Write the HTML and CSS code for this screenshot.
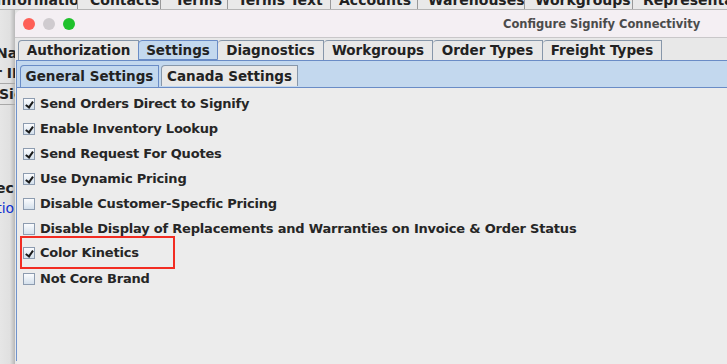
FILE: index.html
```html
<!DOCTYPE html>
<html lang="en">
  <head>
    <meta charset="UTF-8" />
    <title>Configure Signify Connectivity</title>
    <link rel="stylesheet" href="styles.css">
  </head>
  <body>
    <div class="app-tabs">
      <span class="app-tab tab-info">Information</span>
      <span class="app-tab tab-contacts">Contacts</span>
      <span class="app-tab tab-terms">Terms</span>
      <span class="app-tab tab-termstext">Terms Text</span>
      <span class="app-tab tab-accounts">Accounts</span>
      <span class="app-tab tab-warehouses">Warehouses</span>
      <span class="app-tab tab-workgroups">Workgroups</span>
      <span class="app-tab tab-rep">Representatives</span>
    </div>

    <div class="main">
      <div class="app-side">
        <div class="side-gap"></div>
        <div class="side-row side-na">Name</div>
        <div class="side-row side-ir">r ID</div>
        <div class="side-row side-sig">Signify</div>
        <div class="side-blank"></div>
        <div class="side-row side-ec">Spec</div>
        <div class="side-row side-link">Relation</div>
      </div>

      <div class="window">
        <div class="titlebar">
          <span class="light red"></span>
          <span class="light grey"></span>
          <span class="light green"></span>
          <span class="title">Configure Signify Connectivity</span>
        </div>

        <div class="tabs outer-tabs">
          <span class="tab w-auth">Authorization</span>
          <span class="tab selected w-settings">Settings</span>
          <span class="tab w-diag">Diagnostics</span>
          <span class="tab w-work">Workgroups</span>
          <span class="tab w-order">Order Types</span>
          <span class="tab w-freight">Freight Types</span>
        </div>

        <div class="panel">
          <div class="tabs inner-tabs">
            <span class="tab selected w-general">General Settings</span>
            <span class="tab w-canada">Canada Settings</span>
          </div>

          <div class="settings">
            <label class="row"><span class="box checked"></span>Send Orders Direct to Signify</label>
            <label class="row"><span class="box checked"></span>Enable Inventory Lookup</label>
            <label class="row"><span class="box checked"></span>Send Request For Quotes</label>
            <label class="row"><span class="box checked"></span>Use Dynamic Pricing</label>
            <label class="row"><span class="box"></span>Disable Customer-Specfic Pricing</label>
            <label class="row"><span class="box"></span>Disable Display of Replacements and Warranties on Invoice &amp; Order Status</label>
            <label class="row highlight"><span class="box checked"></span>Color Kinetics</label>
            <label class="row"><span class="box"></span>Not Core Brand</label>
          </div>
        </div>
      </div>
    </div>
  </body>
</html>
```

FILE: styles.css
```css
body {
  margin: 0;
  width: 727px;
  height: 364px;
  overflow: hidden;
  background-color: #e4e4e4;
  font-family: "DejaVu Sans", sans-serif;
  font-weight: bold;
  color: #222;
}

/* application behind the dialog */
.app-tabs {
  display: flex;
  height: 9px;
  overflow: hidden;
  background-color: #e9e9e9;
  border-bottom: 1px solid #b5b5b5;
}

.app-tab {
  flex-shrink: 0;
  margin-top: -9px;
  padding-left: 8px;
  font-size: 14px;
  line-height: 18px;
  border-right: 1px solid #999;
  box-sizing: border-box;
  white-space: nowrap;
  overflow: hidden;
}

.tab-info { width: 90px; margin-left: -12px; }
.tab-contacts { width: 83px; padding-left: 12px; }
.tab-terms { width: 67px; padding-left: 14px; }
.tab-termstext { width: 103px; padding-left: 10px; }
.tab-accounts { width: 87px; }
.tab-warehouses { width: 107px; padding-left: 10px; }
.tab-workgroups { width: 108px; padding-left: 10px; }
.tab-rep { width: 120px; padding-left: 10px; }

.main {
  display: flex;
}

.app-side {
  width: 15px;
  flex-shrink: 0;
  overflow: hidden;
  font-size: 14px;
  background: linear-gradient(to right, #e6e6e6 0, #e0e0e0 10px, #b8b8b8 15px);
}

.side-gap {
  height: 33px;
}

.side-row {
  height: 20px;
  line-height: 20px;
  white-space: nowrap;
  border-bottom: 1px solid #a8a8a8;
}

.side-na { margin-left: -4px; border-bottom: none; }
.side-ir { margin-left: -5px; }
.side-sig { margin-left: -1px; }

.side-blank {
  height: 73px;
}

.side-ec { margin-left: -24px; border-bottom: none; }
.side-link { margin-left: -34px; color: #1030d0; font-weight: normal; border-bottom: none; }

/* dialog */
.window {
  width: 740px;
  flex-shrink: 0;
  height: 354px;
  background-color: #e8e8e8;
  border-top-left-radius: 7px;
  overflow: hidden;
}

.titlebar {
  display: flex;
  align-items: center;
  height: 27px;
  padding-left: 8px;
  background-color: #f4eff3;
  border-bottom: 1px solid #c9c7c9;
}

.light {
  width: 12px;
  height: 12px;
  border-radius: 50%;
  margin-right: 8px;
}

.red { background-color: #fe5f57; }
.grey { background-color: #cfcbcf; }
.green { background-color: #1fc12b; }

.title {
  margin-left: 420px;
  font-size: 11.5px;
  color: #4b4b4b;
}

.tabs {
  display: flex;
  align-items: flex-end;
}

.tab {
  flex-shrink: 0;
  box-sizing: border-box;
  height: 20px;
  font-size: 13.5px;
  line-height: 18px;
  text-align: center;
  background-color: #e8e8e8;
  border: 1px solid #8797aa;
  border-bottom: none;
  border-top-left-radius: 4px;
  white-space: nowrap;
}

.tab.selected {
  background-color: #c3d8ee;
  border-color: #6a8cc6;
}

.outer-tabs {
  height: 22px;
  padding-left: 3px;
}

.outer-tabs .tab + .tab {
  border-left: none;
}

.outer-tabs .tab.selected {
  border-bottom: 1px solid #6a8cc6;
  border-left: 1px solid #6a8cc6;
  margin-left: -1px;
}

.w-auth { width: 121px; }
.w-settings { width: 80px; }
.w-diag { width: 106px; }
.w-work { width: 109px; }
.w-order { width: 110px; }
.w-freight { width: 119px; }

.panel {
  height: 300px;
  margin-left: 1px;
  background-color: #c3d8ee;
  border-top: 1px solid #6a8cc6;
  border-left: 1px solid #7093cc;
}

.inner-tabs {
  height: 26px;
  padding-left: 3px;
}

.inner-tabs .tab {
  height: 21px;
  line-height: 20px;
}

.inner-tabs .tab.selected {
  height: 22px;
}

.w-general { width: 139px; }
.w-canada { width: 137px; margin-left: 2px; margin-bottom: 1px; }

.settings {
  height: 280px;
  padding-top: 3px;
  padding-left: 3px;
  background-color: #ececec;
  border-top: 1px solid #6a8cc6;
}

.row {
  display: flex;
  align-items: center;
  width: max-content;
  height: 25px;
  padding-left: 3px;
  padding-right: 8px;
  font-size: 13px;
  letter-spacing: -0.2px;
  color: #262626;
  box-sizing: border-box;
}

.box {
  width: 10px;
  height: 10px;
  margin-right: 5px;
  border: 1px solid #8d9cb0;
  background: linear-gradient(#fbfcfe, #d4e0ec);
  position: relative;
}

.box.checked::after {
  content: "";
  position: absolute;
  left: 3px;
  top: 1px;
  width: 3px;
  height: 6px;
  border-right: 2px solid #1a1a1a;
  border-bottom: 2px solid #1a1a1a;
  transform: rotate(35deg);
}

.highlight {
  height: 33px;
  margin: -5px 0 -3px;
  padding-left: 1px;
  padding-right: 14px;
  border: 2px solid #f22c22;
  width: 155px;
}
```
